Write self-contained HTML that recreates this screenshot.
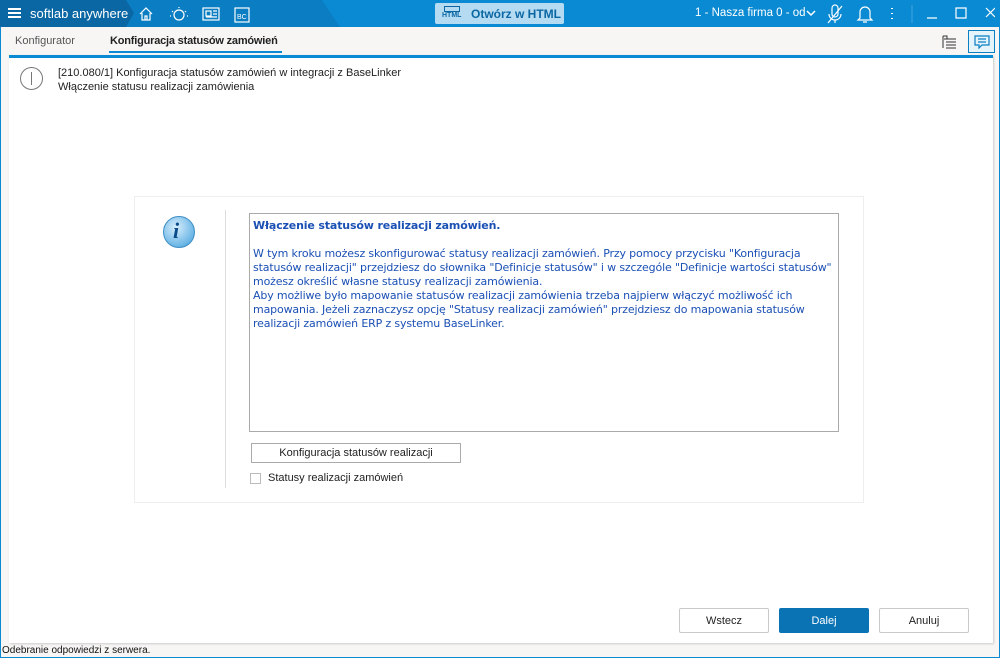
<!DOCTYPE html>
<html><head><meta charset="utf-8"><style>
*{box-sizing:border-box;margin:0;padding:0}
body{width:1000px;height:658px;overflow:hidden;font-family:"Liberation Sans",sans-serif;background:#f7f6f5;position:relative;font-size:12px;color:#222}
.abs{position:absolute}
.top{left:0;top:0;width:1000px;height:27px;background:#0a8ad2}
.dark{left:0;top:0;width:345px;height:27px;background:#0b7dc2;clip-path:polygon(0 0,322px 0,340px 27px,0 27px)}
.darker{left:0;top:0;width:135px;height:27px;background:#0a67a3;clip-path:polygon(0 0,126px 0,134px 13px,126px 27px,0 27px)}
.wt{color:#fff}
.btn{border:1px solid #c9c9c9;background:#fff;border-radius:2px;text-align:center;font-size:11px;line-height:24px}
</style></head><body>
<div class="abs" style="left:0;top:0;width:1000px;height:658px;border:1px solid #0a8ad2"></div>
<div class="abs top"></div>
<div class="abs dark"></div>
<div class="abs darker"></div>
<div class="abs" style="left:8px;top:8px;width:13px;height:2px;background:#fff;box-shadow:0 4px #fff,0 8px #fff"></div>
<div class="abs wt" style="left:30px;top:6px;font-size:13px">softlab anywhere</div>
<svg class="abs" style="left:138px;top:5px" width="120" height="18" fill="none" stroke="#fff" stroke-width="1.2">
<path d="M2 9 L8 3 L14 9 M4 8 V15 H12 V8 M7 15 V11 H9 V15"/>
<circle cx="41" cy="10" r="5"/><path d="M41 2v1 M34 6l1 1 M48 6l-1 1 M32 11h1 M49 11h1"/>
<rect x="65" y="3" width="16" height="12"/><rect x="68" y="6" width="5" height="5"/><path d="M75 6h4 M75 9h4 M68 12h11"/>
<rect x="97" y="3" width="14" height="14"/><text x="99" y="14" font-size="7" fill="#fff" stroke="none" font-family="Liberation Sans">BC</text>
</svg>
<div class="abs" style="left:435px;top:3px;width:129px;height:21px;background:#b4dbf2;border-radius:2px"></div>
<div class="abs" style="left:442px;top:6px;font-size:7px;color:#0b67a3;font-weight:bold;line-height:1"><div style="border:1px solid #0b67a3;width:16px;height:6px;margin-left:2px"></div>HTML</div>
<div class="abs" style="left:471px;top:7px;font-size:12px;color:#0b67a3;font-weight:bold">Otwórz w HTML</div>
<div class="abs wt" style="left:695px;top:7px;font-size:11.5px">1 - Nasza firma 0 - od</div>
<svg class="abs" style="left:806px;top:9px" width="10" height="8" fill="none" stroke="#fff" stroke-width="1.5"><path d="M1 2l4 4 4-4"/></svg>
<svg class="abs" style="left:825px;top:4px" width="170" height="20" fill="none" stroke="#fff" stroke-width="1.2">
<path d="M7 4 a3 3 0 0 1 6 0 v6 a3 3 0 0 1-6 0z M4 10 a6 6 0 0 0 12 0 M10 16v3 M3 19 L17 2"/>
<path d="M35 14 v-6 a5 5 0 0 1 10 0 v6 l2 2 h-14z M38 18h4"/>
<path d="M67 4v1 M67 9v1 M67 14v1" stroke-width="2"/>
<path d="M87 1v18" stroke="#3aa0dc"/>
<path d="M102 14h10 M131 4h10v10h-10z M161 4l9 9 M170 4l-9 9"/>
</svg>
<div class="abs" style="left:15px;top:35px;color:#555;font-size:11px">Konfigurator</div>
<div class="abs" style="left:110px;top:35px;font-size:11px;font-weight:bold;letter-spacing:-0.2px">Konfiguracja statusów zamówień</div>
<div class="abs" style="left:109px;top:51px;width:173px;height:2px;background:#0a8ad2"></div>
<svg class="abs" style="left:940px;top:33px" width="20" height="18" fill="none" stroke="#333"><path d="M3 3h4v3 M4 6h12 M6 9h10 M6 12h10 M6 15h10 M3 3v12"/></svg>
<div class="abs" style="left:968px;top:30px;width:27px;height:23px;border:1px solid #0a7fc2;background:#e5f3fb"></div>
<svg class="abs" style="left:974px;top:35px" width="16" height="14" fill="none" stroke="#0a7fc2" stroke-width="1.2"><path d="M1 1h14v9H8l-3 3v-3H1z M4 4h8 M4 7h8"/></svg>
<div class="abs" style="left:9px;top:55px;width:984px;height:588px;background:#fff;border-top:3px solid #0a8ad2;box-shadow:1px 1px 2px #ccc"></div>
<div class="abs" style="left:20px;top:67px;width:23px;height:23px;border:1px solid #777;border-radius:50%"></div>
<div class="abs" style="left:31px;top:72px;width:1px;height:13px;background:#777"></div>
<div class="abs" style="left:58px;top:66px;font-size:11px;line-height:14px">[210.080/1] Konfiguracja statusów zamówień w integracji z BaseLinker<br>Włączenie statusu realizacji zamówienia</div>
<div class="abs" style="left:134px;top:196px;width:730px;height:307px;border:1px solid #eee"></div>
<div class="abs" style="left:163px;top:216px;width:32px;height:32px;border-radius:50%;background:radial-gradient(circle at 40% 35%,#d8eefc,#6bb6e6 70%,#3a8fc8);border:1px solid #3d8fc6"></div>
<div class="abs" style="left:173px;top:218px;font:italic bold 22px 'Liberation Serif',serif;color:#0a4c8a">i</div>
<div class="abs" style="left:225px;top:210px;width:1px;height:278px;background:#ddd"></div>
<div class="abs" style="left:249px;top:213px;width:590px;height:219px;border:1px solid #aaa;padding:5px 3px;color:#1b50b5;font-size:11px;line-height:14px;font-family:'DejaVu Sans','Liberation Sans',sans-serif;letter-spacing:-0.15px">
<b>Włączenie statusów realizacji zamówień.</b><br><br>W tym kroku możesz skonfigurować statusy realizacji zamówień. Przy pomocy przycisku "Konfiguracja statusów realizacji" przejdziesz do słownika "Definicje statusów" i w szczególe "Definicje wartości statusów" możesz określić własne statusy realizacji zamówienia.<br>Aby możliwe było mapowanie statusów realizacji zamówienia trzeba najpierw włączyć możliwość ich mapowania. Jeżeli zaznaczysz opcję "Statusy realizacji zamówień" przejdziesz do mapowania statusów realizacji zamówień ERP z systemu BaseLinker.</div>
<div class="abs btn" style="left:251px;top:443px;width:210px;height:20px;line-height:18px;border-color:#aaa;border-radius:0">Konfiguracja statusów realizacji</div>
<div class="abs" style="left:250px;top:473px;width:11px;height:11px;border:1px solid #bbb"></div>
<div class="abs" style="left:268px;top:472px;font-size:11px">Statusy realizacji zamówień</div>
<div class="abs btn" style="left:679px;top:608px;width:90px;height:25px">Wstecz</div>
<div class="abs btn" style="left:779px;top:608px;width:90px;height:25px;background:#0a73b4;border-color:#0a73b4;color:#fff">Dalej</div>
<div class="abs btn" style="left:879px;top:608px;width:90px;height:25px">Anuluj</div>
<div class="abs" style="left:2px;top:645px;font-size:10px;color:#111">Odebranie odpowiedzi z serwera.</div>
</body></html>
